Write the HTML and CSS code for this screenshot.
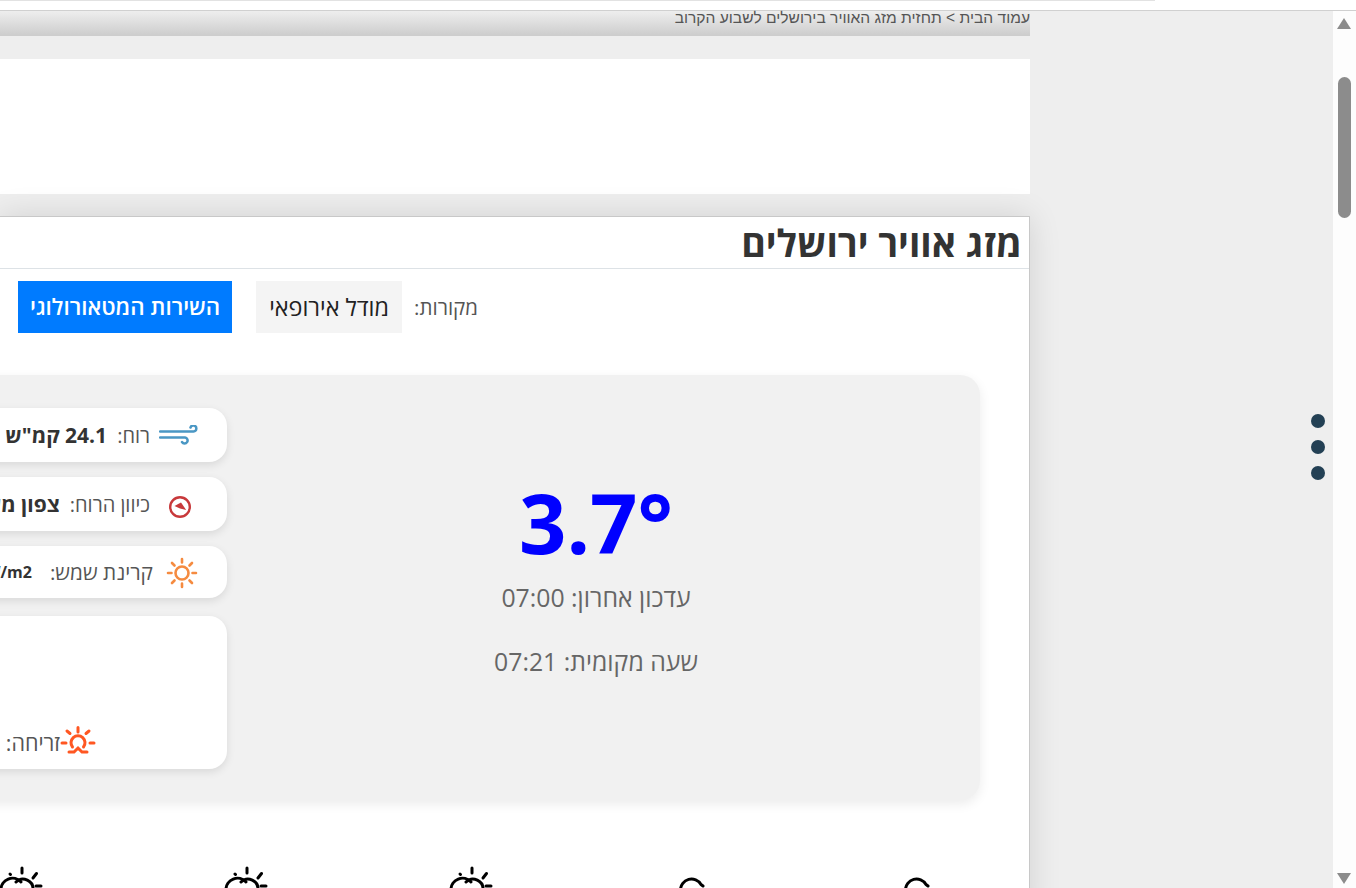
FILE: index.html

```html
<!DOCTYPE html>
<html lang="he">
<head>
    <title>מזג אוויר ירושלים</title>
    <meta charset="UTF-8">
    <link rel="stylesheet" href="styles.css">
</head>
<body>
    <div class="topbar"><div class="progress"></div></div>

    <div class="page">
        <main class="content" dir="rtl">
            <div class="breadcrumb">עמוד הבית &gt; תחזית מזג האוויר בירושלים לשבוע הקרוב</div>
            <div class="ad-band"></div>

            <section class="card">
                <h1>מזג אוויר ירושלים</h1>

                <div class="sources">
                    <span class="sources-label">מקורות:</span>
                    <a class="source-btn">מודל אירופאי</a>
                    <a class="source-btn active">השירות המטאורולוגי</a>
                </div>

                <div class="panel">
                    <div class="now">
                        <div class="temp" dir="ltr">3.7°</div>
                        <div class="updated">עדכון אחרון: 07:00</div>
                        <div class="local">שעה מקומית: 07:21</div>
                    </div>

                    <div class="facts">
                        <div class="fact">
                            <svg class="ic-wind" viewBox="0 0 40 20" fill="none" stroke="#4a97c4" stroke-width="2.500" stroke-linecap="round">
                                <path d="M1 6.500H34.500a3 3 0 1 0-3-4"/>
                                <path d="M1 12.500H26a3 3 0 1 1-3 4.500"/>
                            </svg>
                            <span class="fact-label">רוח:</span>
                            <b class="fact-value">24.1 קמ"ש</b>
                        </div>
                        <div class="fact fact-dir">
                            <svg class="ic-compass" viewBox="0 0 24 24">
                                <circle cx="12" cy="12" r="9.800" fill="none" stroke="#c8393b" stroke-width="2.400"/>
                                <path d="M6.500 11L13 7.500L18.200 15L12 13.500Z" fill="#c8393b"/>
                            </svg>
                            <span class="fact-label">כיוון הרוח:</span>
                            <b class="fact-value">צפון מערב</b>
                        </div>
                        <div class="fact fact-sun">
                            <svg class="ic-sun" viewBox="0 0 32 32" fill="none" stroke="#f58b40" stroke-width="2.600" stroke-linecap="round">
                                <circle cx="16" cy="16" r="6.500"/>
                                <path d="M16 2V5.500M16 26.500V30M2 16H5.500M26.500 16H30M6 6L8.500 8.500M23.500 23.500L26 26M6 26L8.500 23.500M23.500 8.500L26 6"/>
                            </svg>
                            <span class="fact-label">קרינת שמש:</span>
                            <b class="fact-value small" dir="ltr">10 W/m2</b>
                        </div>
                        <div class="fact fact-times">
                            <svg class="ic-rise" viewBox="0 0 36 28" fill="none" stroke="#ff5722" stroke-width="3" stroke-linecap="round">
                                <path d="M18 1.500V6M7 5L10 7.500M29 5L26 7.500M2 17H6M30 17H34"/>
                                <path d="M12.500 21A7 7 0 1 1 23.500 21"/>
                                <path d="M9 26H14L18 22L22 26H27"/>
                            </svg>
                            <span class="fact-label">זריחה:</span>
                            <b class="fact-value">06:25</b>
                        </div>
                    </div>
                </div>

                <div class="forecast">
                    <svg class="day" viewBox="0 0 60 30"><use href="#cloud"/></svg>
                    <svg class="day" viewBox="0 0 60 30"><use href="#cloud"/></svg>
                    <svg class="day" viewBox="0 0 60 30"><use href="#suncloud"/></svg>
                    <svg class="day" viewBox="0 0 60 30"><use href="#suncloud"/></svg>
                    <svg class="day" viewBox="0 0 60 30"><use href="#suncloud"/></svg>
                </div>
            </section>
        </main>

        <aside class="side"></aside>

        <div class="scrollbar">
            <span class="arrow up"></span>
            <span class="thumb"></span>
            <span class="arrow down"></span>
        </div>
    </div>

    <div class="dots"><span></span><span></span><span></span></div>

    <svg class="defs" width="0" height="0">
        <defs>
            <g id="suncloud" fill="none" stroke="#000" stroke-width="3" stroke-linecap="round">
                <path d="M30 8V13M41 18L44.500 13.500M18 14L18.500 14.500M44 26H49"/>
                <path d="M9 30A11.500 11.500 0 0 1 29 22"/>
                <path d="M24 22A10 10 0 0 1 41 30"/>
            </g>
            <g id="cloud" fill="none" stroke="#000" stroke-width="3" stroke-linecap="round">
                <path d="M13.500 30A11 11 0 0 1 34 24.500L36 26"/>
            </g>
        </defs>
    </svg>
</body>
</html>
```

FILE: styles.css

```css
html, body {
    margin: 0;
    height: 888px;
    overflow: hidden;
}
body {
    font-family: 'Open Sans', 'Noto Sans', sans-serif;
    background-color: #eee;
    color: #333;
}
.topbar {
    height: 10px;
    background-color: #fff;
    border-bottom: 1px solid #d0d0d0;
}
.progress {
    width: 1155px;
    height: 1px;
    background-color: #e2e2e2;
}
.page {
    display: flex;
    height: 877px;
}
.content {
    flex: 0 0 1030px;
    min-width: 0;
}
.side {
    flex: 1;
}
.breadcrumb {
    height: 25px;
    font-family: 'Liberation Sans', Arial, sans-serif;
    font-size: 15.6px;
    line-height: 14px;
    color: #555;
    background: linear-gradient(#eee, #ccc);
}
.ad-band {
    height: 135px;
    margin-top: 23px;
    background-color: #fff;
}
.card {
    margin-top: 22px;
    height: 700px;
    background-color: #fff;
    border: 1px solid #c8c8c8;
    border-bottom: none;
    border-left: none;
    box-shadow: 0 0 30px rgba(0, 0, 0, 0.12);
}
h1 {
    margin: 0;
    padding: 0 7px;
    height: 51px;
    font-size: 37.5px;
    line-height: 51px;
    font-weight: 700;
    white-space: nowrap;
    border-bottom: 1px solid #dde2e6;
}
.sources {
    display: flex;
    align-items: center;
    height: 52px;
    margin-top: 12px;
    padding-right: 551px;
}
.sources-label {
    font-size: 20.5px;
    color: #555;
    margin-left: 12px;
    white-space: nowrap;
}
.source-btn {
    display: block;
    height: 52px;
    line-height: 52px;
    padding: 0 13px;
    font-size: 23.400px;
    color: #222;
    background-color: #f4f4f4;
    white-space: nowrap;
}
.source-btn.active {
    margin-right: 24px;
    padding: 0 12px;
    font-size: 22.4px;
    font-weight: 600;
    color: #fff;
    background-color: #007bff;
}
.panel {
    display: flex;
    width: 1200px;
    height: 425px;
    margin: 42px 49px 0 0;
    background-color: #f1f1f1;
    border-radius: 20px;
    box-shadow: 0 4px 12px rgba(0, 0, 0, 0.08);
}
.now {
    flex: 0 0 738px;
    padding: 92px 15px 0 0;
    text-align: center;
    color: #666;
}
.temp {
    font-size: 83px;
    line-height: 110px;
    font-weight: 700;
    color: #00f;
}
.updated, .local {
    font-size: 24.8px;
    line-height: 33px;
}
.updated {
    margin-top: 4px;
}
.local {
    margin-top: 31px;
}
.facts {
    display: flex;
    flex-direction: column;
    flex: 0 0 400px;
    margin-top: 33px;
}
.fact {
    display: flex;
    align-items: center;
    height: 54px;
    margin-bottom: 15px;
    background-color: #fff;
    border-radius: 18px;
    box-shadow: 0 3px 8px rgba(0, 0, 0, 0.1);
    white-space: nowrap;
}
.fact-label {
    font-size: 20px;
    color: #555;
}
.fact-sun .fact-label {
    font-size: 20.8px;
}
.fact-times .fact-label {
    font-size: 21.5px;
}
.fact-value {
    font-size: 21px;
    margin-right: 10px;
}
.fact-value.small {
    font-size: 16px;
    margin-right: 18px;
}
.ic-wind {
    width: 40px;
    height: 20px;
    margin: 0 28px 0 9px;
}
.ic-compass {
    width: 24px;
    height: 24px;
    margin: 6px 35px 0 18px;
}
.fact-sun {
    height: 52px;
    margin-bottom: 18px;
}
.ic-sun {
    width: 32px;
    height: 32px;
    margin: 2px 29px 0 13px;
}
.fact-times {
    height: 153px;
    align-items: flex-end;
    padding-bottom: 12px;
    box-sizing: border-box;
}
.ic-rise {
    width: 36px;
    height: 28px;
    margin: 0 131px 3px 0;
}
.forecast {
    display: flex;
    gap: 165px;
    margin-top: 60px;
    padding-right: 77px;
}
.day {
    flex: 0 0 60px;
    width: 60px;
    height: 30px;
}
.scrollbar {
    flex: 0 0 23px;
    position: relative;
    background-color: #fdfdfd;
}
.thumb {
    position: absolute;
    top: 66px;
    left: 5px;
    width: 13px;
    height: 141px;
    border-radius: 7px;
    background-color: #8c8c8c;
}
.arrow {
    position: absolute;
    left: 4px;
    width: 0;
    height: 0;
    border-left: 7.5px solid transparent;
    border-right: 7.5px solid transparent;
}
.arrow.up {
    top: 7px;
    border-bottom: 11px solid #8c8c8c;
}
.arrow.down {
    bottom: 4px;
    border-top: 11px solid #8c8c8c;
}
.dots {
    position: fixed;
    top: 414px;
    left: 1311px;
    display: flex;
    flex-direction: column;
    gap: 12px;
}
.dots span {
    width: 14px;
    height: 14px;
    border-radius: 50%;
    background-color: #234054;
}
.defs {
    position: absolute;
}
```
